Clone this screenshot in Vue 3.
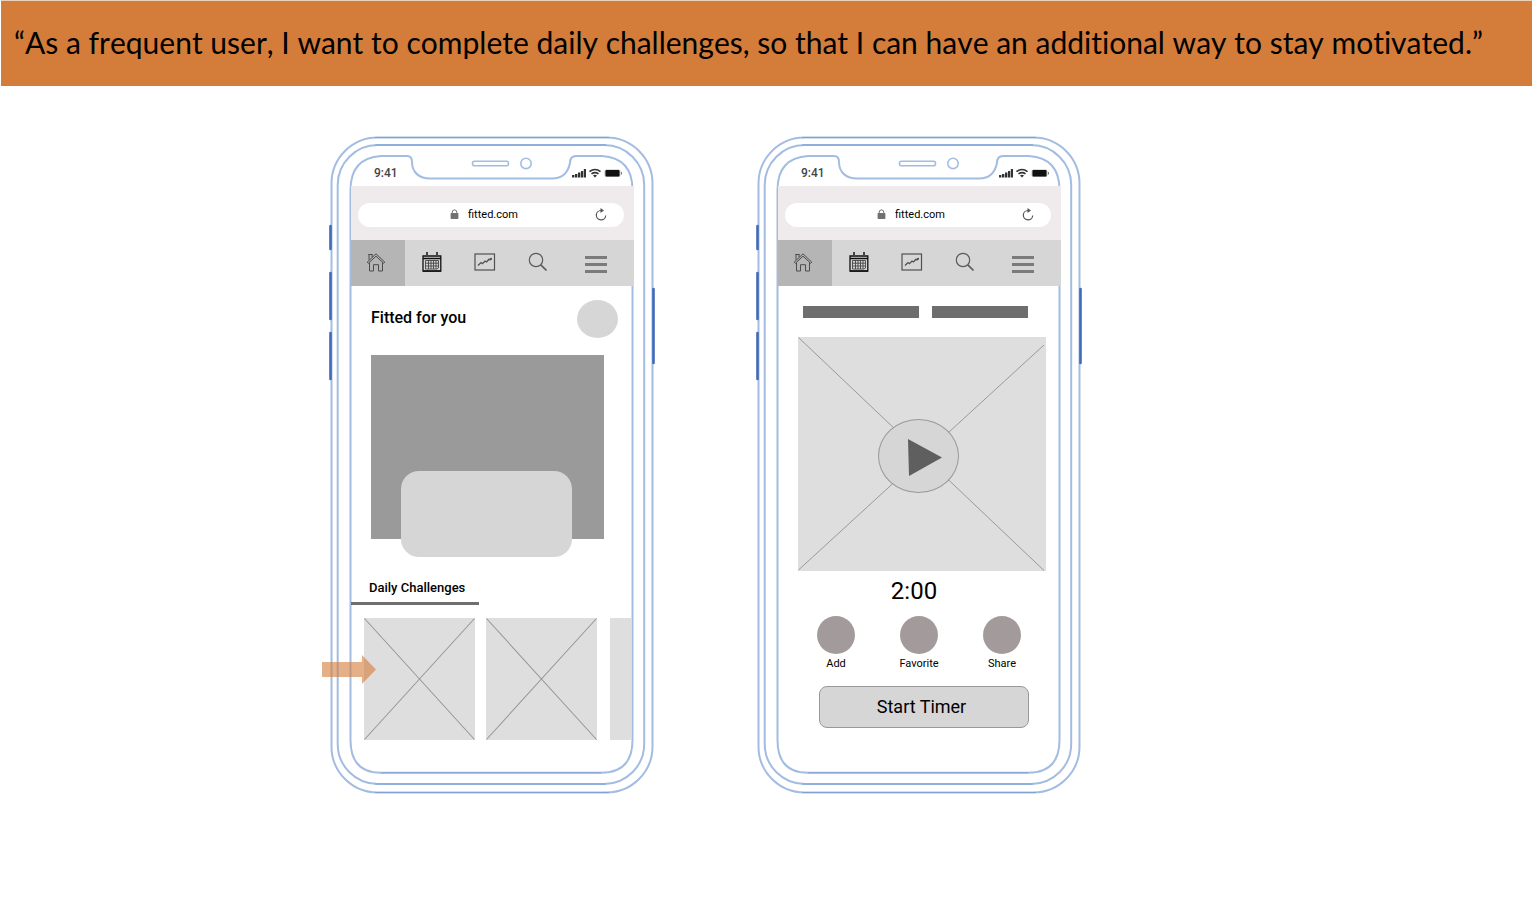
<script setup>
const navItems = ['home', 'calendar', 'progress', 'search', 'menu']
const actions = ['Add', 'Favorite', 'Share']
const phones = ['feed', 'workout']
</script>

<template>
  <div class="page">
    <header class="story">
      <h1>“As a frequent user, I want to complete daily challenges, so that I can have an additional way to stay motivated.”</h1>
    </header>

    <main class="stage">
      <section v-for="phone in phones" :key="phone" class="phone" :aria-label="phone">
        <svg class="frame" viewBox="0 0 326 658" aria-hidden="true">
          <g fill="none" stroke="#a3bde2" stroke-width="2">
            <rect x="2.5" y="1.5" width="321" height="655" rx="46" />
            <rect x="8.7" y="9" width="306.5" height="639" rx="40" />
            <path d="M52 20H78Q83 20 83 26C83 37 91 42.500 101 42.500H223C233 42.500 239 37 241 27Q241 20 247 20H273Q303.500 22 303.500 54V604Q303.500 636.800 272 636.800H52Q21.500 636.800 21.500 604V54Q21.500 22 52 20Z" />
            <rect x="143.5" y="25.2" width="36" height="4.6" rx="2" stroke-width="1.6" />
            <circle cx="197" cy="27.4" r="5.2" stroke-width="1.6" />
          </g>
          <g fill="none" stroke="#7fa1d6" stroke-width="1">
            <path d="M46 1.500H280M46 9H277M52 636.800H272M46 648H277M46 656.500H280" />
          </g>
          <path d="M1.500 90v23M1.500 137v46M1.500 197v46M324.500 153v74" stroke="#416ab9" stroke-width="2.6" stroke-linecap="round" />
        </svg>

        <div class="status">
          <span>9:41</span>
          <svg width="50" height="12" viewBox="0 0 50 12" aria-hidden="true">
            <path d="M0 8h2.400v2.500H0zM3 7h2.400v3.500H3zM6 5.500h2.400v5H6zM9 4h2.200v6.500H9zM11.800 2h2.200v8.500h-2.200z" fill="#333" />
            <g fill="none" stroke="#333" stroke-width="1.700">
              <path d="M17.500 4.600q5.500-4.200 11 0M19.500 6.900q3.500-2.600 7 0" />
            </g>
            <path d="M21 8.500q2-1.400 4 0l-2 2z" fill="#333" />
            <rect x="32.500" y="2.500" width="16" height="7.500" rx="2" fill="#bbb" />
            <rect x="33.500" y="3" width="14" height="6.500" rx="1" fill="#111" />
            <path d="M49.500 5v2.500" stroke="#777" />
          </svg>
        </div>

        <form class="browser" @submit.prevent>
          <div class="address">
            <svg width="9" height="11" viewBox="0 0 9 11" aria-hidden="true">
              <path d="M2.200 5V3.200a2.300 2.300 0 0 1 4.600 0V5" fill="none" stroke="#717171" />
              <rect x=".6" y="4" width="7.800" height="6" rx=".8" fill="#717171" />
            </svg>
            <input type="text" value="fitted.com" aria-label="Address" />
            <button type="submit" aria-label="Reload">
              <svg width="12" height="14" viewBox="0 0 12 14">
                <path d="M6 3.500A4.700 4.700 0 1 0 10.700 8.500" fill="none" stroke="#555" stroke-width="1.200" />
                <path d="M5.500 1 9 3.600 5.500 6z" fill="#555" />
              </svg>
            </button>
          </div>
        </form>

        <nav class="tabs" aria-label="Main">
          <button v-for="item in navItems" :key="item" type="button" :class="['tab', item]" :aria-label="item">
            <svg v-if="item === 'home'" width="20" height="20" viewBox="0 0 20 20" fill="none" stroke="#4c4c4c" stroke-width="1">
              <path d="M1.200 10.200 10 1.800l8.800 8.400-1.100 1.100L10 4.200l-7.700 7.100zM3 7.800V2.500h3v2.700M2.300 2.500h4.400M3.500 10.500v8.500h4v-6.300h5V19h4v-8.500" />
            </svg>
            <svg v-else-if="item === 'calendar'" width="20" height="20" viewBox="0 0 20 20" fill="none" stroke="#111">
              <path d="M1 4h17.800v15.200H1z" stroke-width="1.300" />
              <path d="M1 6.500h18M1 19h18" stroke-width="1.600" />
              <path d="M5 0v4.500M15 0v4.500" stroke="#444" stroke-width="2" />
              <path d="M3.500 8.500h13v7.500l-1.500 1H3.500zM3.500 11.200h13M3.500 14h13M6.500 8.500V17M9 8.500V17M11.500 8.500V17M14 8.500V17" stroke="#444" stroke-width=".9" />
            </svg>
            <svg v-else-if="item === 'progress'" width="22" height="18" viewBox="0 0 22 18" fill="none" stroke="#505050">
              <rect x="1" y="1" width="19.500" height="16" stroke-width="1.200" />
              <path d="m4 12.500 3-3 1.500 1.200L11 8l1.500 1L15 6.200l1 .8 1.500-1.500" stroke-width="1.300" />
              <circle cx="17" cy="5.800" r="1" fill="#505050" stroke="none" />
            </svg>
            <svg v-else-if="item === 'search'" width="20" height="20" viewBox="0 0 20 20" fill="none" stroke="#5a5a5a">
              <circle cx="8" cy="8" r="6.700" stroke-width="1.200" />
              <path d="m12.800 12.800 5.700 5.700" stroke-width="1.700" />
            </svg>
            <svg v-else width="22" height="18" viewBox="0 0 22 18" fill="#7b7b7b">
              <path d="M0 0h22v3H0zM0 7h22v3H0zM0 14h22v3H0z" />
            </svg>
          </button>
        </nav>

        <template v-if="phone === 'feed'">
          <div class="heading">
            <h2>Fitted for you</h2>
            <button type="button" class="avatar" aria-label="Profile"></button>
          </div>
          <div class="hero"><div class="hero-card"></div></div>
          <h3 class="section-title">Daily Challenges</h3>
          <div class="challenges">
            <a v-for="n in 3" :key="n" href="#" class="challenge" :aria-label="'Challenge ' + n">
              <svg v-if="n < 3" viewBox="0 0 110 122" preserveAspectRatio="none" aria-hidden="true">
                <path d="M.5.500l109 121M109.500.500.500 121.500" stroke="#959595" />
              </svg>
            </a>
          </div>
          <svg class="pointer" viewBox="0 0 54 29" aria-hidden="true">
            <path d="M0 7h40V0l14 14.500L40 29v-7H0z" fill="#d47c39" fill-opacity=".6" />
          </svg>
        </template>

        <template v-else>
          <div class="crumbs"><span class="bar"></span><span class="bar"></span></div>
          <div class="video">
            <svg viewBox="0 0 248 235" preserveAspectRatio="none" aria-hidden="true">
              <path d="M.5.500 246 234.500M246 8 .5 234" stroke="#999" />
            </svg>
            <button type="button" class="play" aria-label="Play">
              <svg width="34" height="38" viewBox="0 0 34 38"><path d="M0 0 1 37l33-18.500z" fill="#5f5f5f" /></svg>
            </button>
          </div>
          <p class="time">2:00</p>
          <div class="actions">
            <button v-for="action in actions" :key="action" type="button" class="action">
              <span class="dot"></span>{{ action }}
            </button>
          </div>
          <button type="button" class="start">Start Timer</button>
        </template>
      </section>
    </main>
  </div>
</template>

<style>
body {
  margin: 0;
  background: #fff;
}
</style>

<style scoped>
.page {
  min-height: 100vh;
  color: #000;
  font-family: Roboto, "Liberation Sans", sans-serif;
}
.page * {
  box-sizing: border-box;
}
h1, h2, h3, p {
  margin: 0;
  font-weight: 400;
}
button, input {
  margin: 0;
  padding: 0;
  border: 0;
  background: none;
  color: inherit;
  font: inherit;
}
svg {
  display: block;
}
.story {
  min-height: 86px;
  margin-left: 1px;
  padding: 21px 13px;
  border-top: 1px solid #ecd0b9;
  background: #d47c39;
}
.story h1 {
  font-family: Lato, "Liberation Sans", sans-serif;
  font-size: 30px;
  line-height: 40px;
  font-variant-ligatures: none;
  font-kerning: none;
}
.stage {
  display: flex;
  flex-wrap: wrap;
  justify-content: center;
  gap: 101px;
  padding: 50px 121px 50px 0;
}
.phone {
  position: relative;
  display: flex;
  flex-direction: column;
  flex: 0 0 326px;
  min-width: 0;
  min-height: 658px;
  padding: 20px 21px 22px 22px;
}
.frame {
  position: absolute;
  inset: 0;
  width: 100%;
  height: 100%;
  pointer-events: none;
}
.status {
  display: flex;
  justify-content: space-between;
  align-items: center;
  height: 30px;
  padding: 4px 12px 0 23px;
  color: #444;
  font-size: 12px;
  font-weight: 500;
}
.browser {
  position: relative;
  padding: 17px 10px 13px 7px;
  background: #efebec;
}
.address {
  display: flex;
  align-items: center;
  height: 24px;
  padding: 0 17px 2px 92px;
  border-radius: 12px;
  background: #fff;
}
.address input {
  flex: 1;
  width: 0;
  min-width: 0;
  margin-left: 9px;
  font-size: 11px;
}
.tabs {
  position: relative;
  display: grid;
  grid-template-columns: 54px 53px 53px 53px 1fr;
  height: 46px;
  background: #d6d6d6;
}
.tab {
  display: flex;
  justify-content: center;
  align-items: center;
  padding-bottom: 2px;
}
.tab.home {
  padding-right: 4px;
  background: #b5b5b5;
}
.tab.menu {
  padding: 4px 6px 0 0;
}
.heading {
  display: flex;
  justify-content: space-between;
  align-items: center;
  padding: 14px 16px 0 20px;
}
.heading h2 {
  padding-bottom: 3px;
  font-size: 16px;
  font-weight: 500;
}
.avatar {
  width: 41px;
  height: 38px;
  border-radius: 50%;
  background: #d6d6d6;
}
.hero {
  position: relative;
  height: 184px;
  margin: 17px 30px 0 20px;
  background: #9a9a9a;
}
.hero-card {
  position: absolute;
  left: 30px;
  right: 32px;
  bottom: -18px;
  height: 86px;
  border-radius: 18px;
  background: #d6d6d6;
}
.section-title {
  position: relative;
  align-self: flex-start;
  width: 128px;
  margin-top: 39px;
  padding: 0 0 4px 18px;
  border-bottom: 3px solid #6f6f6f;
  font-size: 13px;
  font-weight: 500;
  line-height: 20px;
  white-space: nowrap;
}
.challenges {
  display: grid;
  grid-template-columns: 1fr 1fr 23px;
  column-gap: 11px;
  margin: 13px 3px 0 13px;
}
.challenge {
  height: 122px;
  background: #dedede;
}
.challenge:last-child {
  margin-left: 2px;
}
.challenge svg {
  width: 100%;
  height: 100%;
}
.pointer {
  position: absolute;
  left: -7px;
  top: 519px;
  width: 54px;
  height: 29px;
}
.crumbs {
  display: grid;
  grid-template-columns: 116px 96px;
  gap: 13px;
  padding: 20px 0 0 25px;
}
.bar {
  height: 12px;
  background: #6e6e6e;
}
.video {
  position: relative;
  height: 234px;
  margin: 19px 15px 0 20px;
  background: #dedede;
}
.video > svg {
  width: 100%;
  height: 100%;
}
.play {
  position: absolute;
  left: 80px;
  top: 82px;
  display: flex;
  justify-content: center;
  align-items: center;
  width: 81px;
  height: 74px;
  padding: 4px 0 0 12px;
  border: 1px solid #999;
  border-radius: 50%;
  background: #d6d6d6;
}
.time {
  margin: 5px 11px 0 0;
  font-size: 24px;
  line-height: 30px;
  text-align: center;
}
.actions {
  display: flex;
  justify-content: space-between;
  padding: 10px 37px 0 36px;
}
.action {
  display: flex;
  flex-direction: column;
  align-items: center;
  gap: 2px;
  width: 44px;
  font-size: 11px;
  line-height: 16px;
}
.dot {
  width: 38px;
  height: 38px;
  border-radius: 50%;
  background: #a39a9b;
}
.start {
  height: 42px;
  margin: 14px 32px 0 41px;
  padding: 0 5px 2px 0;
  border: 1px solid #999;
  border-radius: 8px;
  background: #d6d6d6;
  font-size: 18px;
}
</style>
